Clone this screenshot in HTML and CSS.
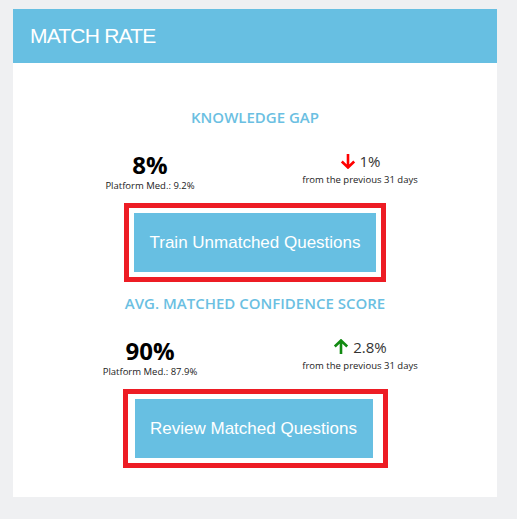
FILE: index.html
```html
<!DOCTYPE html>
<html>
<head>
  <title>Match Rate</title>
  <link rel="stylesheet" href="styles.css">
</head>
<body>
  <div class="card">
    <div class="card-header">MATCH RATE</div>
    <div class="card-body">
      <div class="section">
        <h3 class="section-title">KNOWLEDGE GAP</h3>
        <div class="stats">
          <div class="stat">
            <div class="big">8%</div>
            <div class="sub">Platform Med.: 9.2%</div>
          </div>
          <div class="stat">
            <div class="change">
              <svg class="arrow down" viewBox="0 0 16 16" width="16" height="16"><path d="M8 1V14.5M1.8 8.5L8 14.5L14.2 8.5"/></svg>
              <span>1%</span>
            </div>
            <div class="sub">from the previous 31 days</div>
          </div>
        </div>
        <div class="action">
          <div class="highlight">
            <button class="btn">Train Unmatched Questions</button>
          </div>
        </div>
      </div>
      <div class="section">
        <h3 class="section-title">AVG. MATCHED CONFIDENCE SCORE</h3>
        <div class="stats">
          <div class="stat">
            <div class="big">90%</div>
            <div class="sub">Platform Med.: 87.9%</div>
          </div>
          <div class="stat">
            <div class="change">
              <svg class="arrow up" viewBox="0 0 16 16" width="16" height="16"><path d="M8 15V1.5M1.8 7.5L8 1.5L14.2 7.5"/></svg>
              <span>2.8%</span>
            </div>
            <div class="sub">from the previous 31 days</div>
          </div>
        </div>
        <div class="action">
          <div class="highlight wide">
            <button class="btn">Review Matched Questions</button>
          </div>
        </div>
      </div>
    </div>
  </div>
</body>
</html>
```

FILE: styles.css
```css
body {
  margin: 0;
  padding: 9px 0 0 13px;
  background-color: #eff0f2;
  font-family: "Open Sans", "Noto Sans", sans-serif;
}

.card {
  width: 484px;
  background-color: #ffffff;
}

.card-header {
  height: 54px;
  display: flex;
  align-items: center;
  padding-left: 17px;
  background-color: #67bfe2;
  color: #ffffff;
  font-family: "Liberation Sans", Arial, sans-serif;
  font-size: 21px;
  letter-spacing: -0.8px;
}

.card-body {
  padding: 44px 32px 18px;
}

.section-title {
  margin: 0;
  text-align: center;
  color: #6bbfe2;
  font-size: 15px;
  font-weight: 600;
  line-height: 20px;
}

.stats {
  display: grid;
  grid-template-columns: 1fr 1fr;
  margin-top: 24px;
}

.stat {
  text-align: center;
}

.big {
  font-size: 24px;
  font-weight: 700;
  line-height: 28px;
  color: #000000;
}

.sub {
  font-size: 9.5px;
  line-height: 13px;
  color: #222222;
}

.change {
  display: flex;
  justify-content: center;
  align-items: center;
  gap: 4px;
  height: 24px;
  margin-top: -2px;
  font-size: 15px;
  color: #333333;
}

.arrow {
  fill: none;
  stroke-width: 2.6;
}

.arrow.down {
  stroke: #ff0000;
}

.arrow.up {
  stroke: #118a11;
}

.action {
  display: flex;
  justify-content: center;
  margin: 11px 0;
}

.highlight {
  display: flex;
  padding: 5px;
  border: 5px solid #ed1c24;
}

.highlight.wide {
  padding: 5px 10px 5px 7px;
}

.btn {
  width: 242px;
  height: 59px;
  padding: 0;
  border: none;
  background-color: #67bfe2;
  color: #ffffff;
  font-family: "Liberation Sans", Arial, sans-serif;
  font-size: 17px;
  cursor: pointer;
}

.wide .btn {
  width: 238px;
}
```
